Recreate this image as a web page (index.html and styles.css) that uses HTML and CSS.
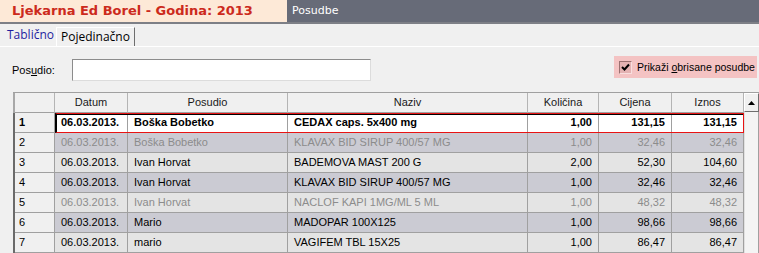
FILE: index.html
```html
<!DOCTYPE html>
<html lang="hr">
<head>
    <meta charset="UTF-8">
    <title>Posudbe</title>
    <link rel="stylesheet" href="styles.css">
</head>
<body>
    <header class="topbar">
        <div class="app-title">Ljekarna Ed Borel - Godina: 2013</div>
        <div class="section-title">Posudbe</div>
    </header>

    <nav class="tabs">
        <div class="tab active">Tablično</div>
        <div class="tab">Pojedinačno</div>
    </nav>

    <div class="filters">
        <label class="field-label" for="posudio">Pos<u>u</u>dio:</label>
        <input class="field-input" id="posudio" type="text">
        <div class="deleted-toggle">
            <span class="checkbox">
                <svg width="9" height="9" viewBox="0 0 9 9"><path d="M1 4 L3.5 6.5 L8 1.5" fill="none" stroke="#000" stroke-width="2"/></svg>
            </span>
            <span>Prikaži <u>o</u>brisane posudbe</span>
        </div>
    </div>

    <div class="grid-wrap">
        <div class="grid">
            <div class="row head">
                <div class="cell"></div>
                <div class="cell">Datum</div>
                <div class="cell">Posudio</div>
                <div class="cell">Naziv</div>
                <div class="cell">Količina</div>
                <div class="cell">Cijena</div>
                <div class="cell">Iznos</div>
            </div>
            <div class="row current">
                <div class="cell idx">1</div>
                <div class="cell">06.03.2013.</div>
                <div class="cell">Boška Bobetko</div>
                <div class="cell">CEDAX caps. 5x400 mg</div>
                <div class="cell num">1,00</div>
                <div class="cell num">131,15</div>
                <div class="cell num">131,15</div>
            </div>
            <div class="row dark deleted">
                <div class="cell idx">2</div>
                <div class="cell">06.03.2013.</div>
                <div class="cell">Boška Bobetko</div>
                <div class="cell">KLAVAX BID SIRUP 400/57 MG</div>
                <div class="cell num">1,00</div>
                <div class="cell num">32,46</div>
                <div class="cell num">32,46</div>
            </div>
            <div class="row light">
                <div class="cell idx">3</div>
                <div class="cell">06.03.2013.</div>
                <div class="cell">Ivan Horvat</div>
                <div class="cell">BADEMOVA MAST 200 G</div>
                <div class="cell num">2,00</div>
                <div class="cell num">52,30</div>
                <div class="cell num">104,60</div>
            </div>
            <div class="row dark">
                <div class="cell idx">4</div>
                <div class="cell">06.03.2013.</div>
                <div class="cell">Ivan Horvat</div>
                <div class="cell">KLAVAX BID SIRUP 400/57 MG</div>
                <div class="cell num">1,00</div>
                <div class="cell num">32,46</div>
                <div class="cell num">32,46</div>
            </div>
            <div class="row light deleted">
                <div class="cell idx">5</div>
                <div class="cell">06.03.2013.</div>
                <div class="cell">Ivan Horvat</div>
                <div class="cell">NACLOF KAPI 1MG/ML 5 ML</div>
                <div class="cell num">1,00</div>
                <div class="cell num">48,32</div>
                <div class="cell num">48,32</div>
            </div>
            <div class="row dark">
                <div class="cell idx">6</div>
                <div class="cell">06.03.2013.</div>
                <div class="cell">Mario</div>
                <div class="cell">MADOPAR 100X125</div>
                <div class="cell num">1,00</div>
                <div class="cell num">98,66</div>
                <div class="cell num">98,66</div>
            </div>
            <div class="row light">
                <div class="cell idx">7</div>
                <div class="cell">06.03.2013.</div>
                <div class="cell">mario</div>
                <div class="cell">VAGIFEM TBL 15X25</div>
                <div class="cell num">1,00</div>
                <div class="cell num">86,47</div>
                <div class="cell num">86,47</div>
            </div>
        </div>
        <div class="scrollbar">
            <div class="scroll-btn">
                <svg width="7" height="4" viewBox="0 0 7 4"><path d="M3.5 0 L7 4 L0 4 Z" fill="#000"/></svg>
            </div>
            <div class="scroll-track"></div>
        </div>
    </div>
</body>
</html>
```

FILE: styles.css
```css
body {
    margin: 0;
    background-color: #f0f0f0;
    font-family: 'Liberation Sans', Arial, sans-serif;
    font-size: 11px;
    color: #000;
    height: 253px;
    overflow: hidden;
}

/* top bar */
.topbar {
    display: flex;
    height: 22px;
    border-bottom: 2px solid #7d7f86;
}

.app-title {
    width: 275px;
    padding-left: 12px;
    background-color: #fde9d7;
    color: #cc2a1c;
    font-family: 'DejaVu Sans', Verdana, sans-serif;
    font-weight: bold;
    font-size: 13px;
    line-height: 22px;
}

.section-title {
    flex: 1;
    padding-left: 5px;
    background-color: #676b78;
    color: #fff;
    font-family: 'DejaVu Sans', Verdana, sans-serif;
    font-size: 11px;
    line-height: 22px;
}

/* tabs */
.tabs {
    display: flex;
    align-items: flex-end;
    height: 22px;
    border-bottom: 1px solid #fff;
    font-family: 'Open Sans', 'DejaVu Sans', sans-serif;
    font-size: 12px;
}

.tab {
    height: 18px;
    line-height: 18px;
    padding: 0 4px;
    border-left: 1px solid #fff;
    border-right: 1px solid #6e6e6e;
    border-top: 1px solid #fff;
}

.tab.active {
    height: 22px;
    line-height: 21px;
    width: 49px;
    padding: 0 0 0 7px;
    border: none;
    color: #1f1fa0;
}

/* filter row */
.filters {
    display: flex;
    align-items: flex-start;
    padding: 9px 2px 0 12px;
}

.field-label {
    width: 60px;
    margin-top: 3px;
    line-height: 22px;
}

.field-input {
    width: 299px;
    height: 22px;
    margin: 3px 0 0 0;
    padding: 0;
    box-sizing: border-box;
    border: 1px solid;
    border-color: #8c8c8c #dcdcdc #dcdcdc #8c8c8c;
    background-color: #fff;
}

.deleted-toggle {
    margin-left: auto;
    display: flex;
    align-items: center;
    height: 22px;
    width: 143px;
    box-sizing: border-box;
    padding-left: 5px;
    background-color: #f4c3c3;
    font-size: 10.5px;
}

.checkbox {
    display: flex;
    align-items: center;
    justify-content: center;
    width: 13px;
    height: 13px;
    box-sizing: border-box;
    margin-right: 5px;
    border: 1px solid;
    border-color: #9a7070 #f8dede #f8dede #9a7070;
    background-color: #e4b2b2;
}

/* grid */
.grid-wrap {
    display: flex;
    margin: 11px 0 0 13px;
}

.grid {
    width: 731px;
    border-top: 1px solid #a0a0a0;
}

.row {
    position: relative;
    display: grid;
    grid-template-columns: 40px 73px 160px 240px 71px 73px 72px;
    height: 20px;
    border-left: 2px solid #6a6a6a;
}

.row.head {
    height: 20px;
    border-left-color: #a8a8a8;
}

.cell {
    box-sizing: border-box;
    padding: 0 6px;
    line-height: 19px;
    white-space: nowrap;
    overflow: hidden;
    border-right: 1px solid #a0a0a0;
    border-bottom: 1px solid #a0a0a0;
}

.head .cell {
    text-align: center;
    background-color: #f0f0f0;
    color: #1a1a1a;
    border-right-color: #b4b4b4;
}

.cell.idx {
    padding-left: 4px;
    background-color: #f0f0f0;
}

.cell.num {
    text-align: right;
}

.row.dark .cell {
    background-color: #cbcbd3;
}

.row.light .cell {
    background-color: #e4e4e4;
}

.row .cell.idx {
    background-color: #f0f0f0;
}

.row.deleted .cell {
    color: #8c8c8c;
}

.row.deleted .cell.idx {
    color: #000;
}

.row.current .cell {
    background-color: #fff;
    font-weight: bold;
}

.row.current .cell.idx {
    background-color: #f0f0f0;
}

.row.current::after {
    content: "";
    position: absolute;
    top: 0;
    bottom: 0;
    left: 40px;
    right: 0;
    border: 1px solid #e81414;
    border-left: 2px solid #000;
    box-shadow: inset 0 1px 0 #000;
}

/* scrollbar */
.scrollbar {
    width: 15px;
    display: flex;
    flex-direction: column;
    border-top: 1px solid #a0a0a0;
}

.scroll-btn {
    display: flex;
    align-items: center;
    justify-content: center;
    height: 19px;
    box-sizing: border-box;
    border: 1px solid;
    border-color: #fff #6e6e6e #6e6e6e #fff;
    background-color: #f0f0f0;
}

.scroll-track {
    flex: 1;
    background-color: #f4f4f4;
    border-left: 1px solid #e0e0e0;
    border-right: 1px solid #a0a0a0;
}
```
